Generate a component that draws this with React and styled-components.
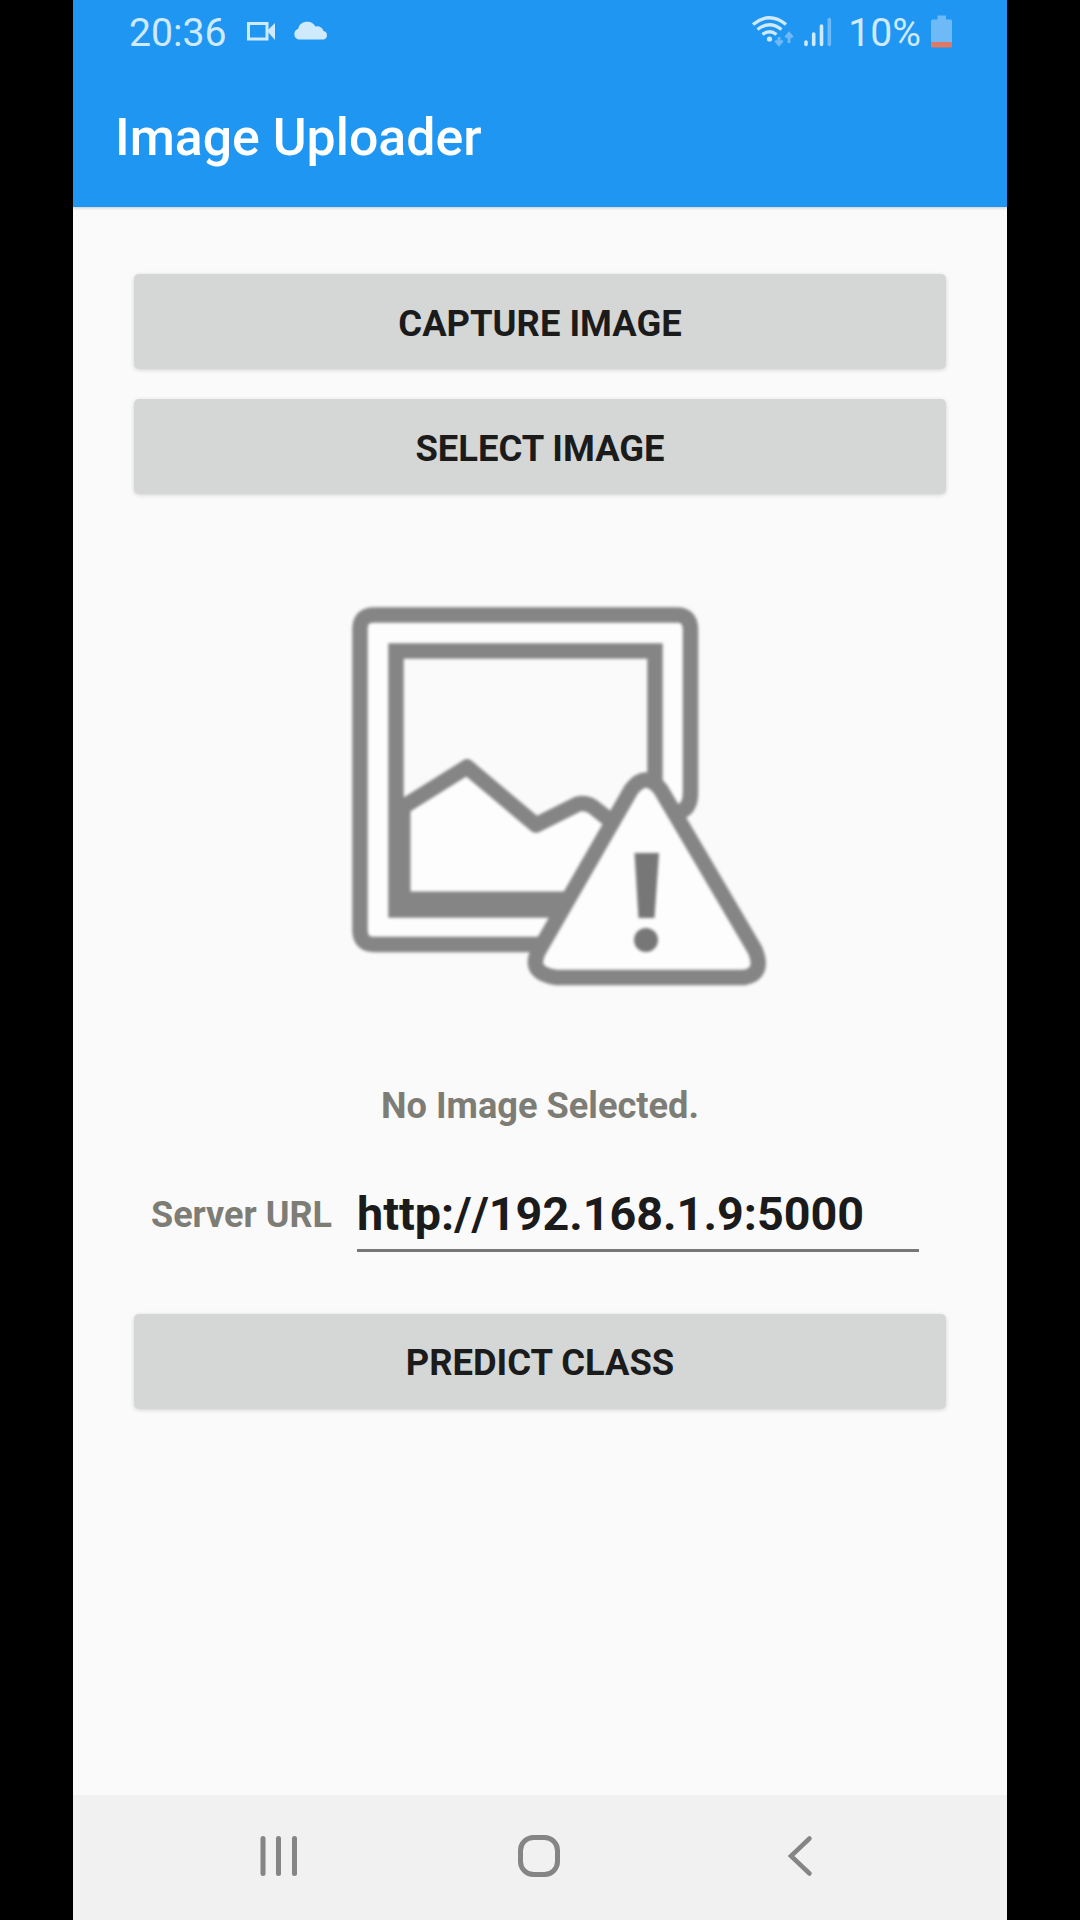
import React from "react";
import styled, { createGlobalStyle } from "styled-components";

const Global = createGlobalStyle`
  *{box-sizing:border-box}
  html,body{margin:0;background:#000}
  body{font-family:Roboto,"Liberation Sans",sans-serif}
`;
const Screen = styled.div`
  width:934px;height:1920px;margin:0 auto;background:#fafafa;
  display:flex;flex-direction:column;overflow:hidden;
`;
const Header = styled.header`
  height:207px;flex:none;background:#2096f3;color:#fff;
  display:flex;flex-direction:column;box-shadow:0 1px 3px rgba(0,0,0,.2);
`;
const StatusBar = styled.div`
  height:64px;padding:0 55px 0 56px;display:flex;justify-content:space-between;
`;
const StatusGroup = styled.div`display:flex;align-items:flex-start;`;
const StatusText = styled.span`
  font-size:39.2px;line-height:46px;margin-top:10px;color:#cfe9fd;white-space:nowrap;
  margin-right:${p => p.$gap}px;
`;
const Icon = styled.svg`display:block;flex:none;overflow:visible;`;
const Title = styled.h1`
  margin:43px 0 0 42px;font-weight:500;font-size:51.8px;line-height:62px;white-space:nowrap;
`;
const Content = styled.main`
  flex:1;padding:67px 61px 0;display:flex;flex-direction:column;
`;
const Button = styled.button`
  width:812px;height:95px;border:0;border-radius:5px;background:#d5d6d6;color:#1b1b1b;
  font:700 36.4px/42px Roboto,"Liberation Sans",sans-serif;padding:${p => p.$nudge || 5}px 0 0;
  margin-top:${p => p.$top || 0}px;text-align:center;
  box-shadow:0 1px 4px rgba(0,0,0,.16);
`;
const Picture = styled(Icon)`margin:86px 0 0 208px;filter:blur(1.6px);`;
const Caption = styled.p`
  margin:91px 0 0;text-align:center;font-weight:700;font-size:36.2px;line-height:42px;color:#7d7d76;
`;
const UrlRow = styled.label`
  margin-top:59px;padding-left:17px;display:flex;align-items:flex-start;
`;
const UrlLabel = styled.span`
  width:206px;font-weight:700;font-size:36px;line-height:42px;padding-top:8px;color:#7d7d76;white-space:nowrap;
`;
const UrlInput = styled.input`
  width:562px;height:66px;border:0;border-bottom:3px solid #77777a;outline:0;
  background:transparent;color:#1b1b1b;padding:0 0 8px;font-kerning:none;
  font:700 46.7px/55px Roboto,"Liberation Sans",sans-serif;font-kerning:none;
`;
const NavBar = styled.nav`
  height:125px;flex:none;background:#f1f1f1;display:flex;align-items:center;
  justify-content:space-between;padding:0 195px 3px 187px;
`;
const HomeIcon = styled(Icon)`margin-right:8px;`;

const light = "#cfe9fd";
const dim = "#6dbaf7";

export default function App() {
  return (
    <>
      <Global />
      <Screen>
        <Header>
          <StatusBar>
            <StatusGroup>
              <StatusText $gap={20}>20:36</StatusText>
              <Icon width="145" height="60" viewBox="247 0 145 60">
                <rect x="248.500" y="23.500" width="18.500" height="15.500" fill="none" stroke={light} strokeWidth="3" />
                <path d="M267 31 L275 23 V40 Z" fill={light} />
                <path d="M298.500 39.500 a5.500 5.500 0 0 1 -0.500 -10.500 a9.500 9.500 0 0 1 17.500 -2.500 a7.300 7.300 0 0 1 8 4.500 a4.300 4.300 0 0 1 -0.500 8.500 z" fill={light} />
              </Icon>
            </StatusGroup>
            <StatusGroup>
              <Icon width="96" height="60" viewBox="753 0 96 60">
                <g fill="none" stroke={light} strokeWidth="3.200">
                  <path d="M754 24.500 Q770.500 11 787 24.500" />
                  <path d="M758.500 29.500 Q770.500 20 782.500 29.500" />
                  <path d="M763.500 34.500 Q770.500 29 777.500 34.500" />
                </g>
                <circle cx="770.500" cy="39" r="2.600" fill={light} />
                <path d="M780 37v7M776.500 40.500l3.500 4l3.500-4M790 43v-8M786.500 37.500l3.500-4l3.500 4" fill="none" stroke={dim} strokeWidth="2.800" />
                <g strokeWidth="3.600" strokeLinecap="round">
                  <path d="M807 42v2.500M814.700 34v10.500M822.500 26v18.500" stroke={light} />
                  <path d="M830.300 19.500v25" stroke={dim} />
                </g>
              </Icon>
              <StatusText $gap={10}>10%</StatusText>
              <Icon width="21" height="60" viewBox="931 0 21 60">
                <path d="M937.500 15.500h8.500v4h4.500q1.500 0 1.500 1.500V42h-21V21q0-1.500 1.500-1.500H937.500z" fill={dim} />
                <path d="M931 42h21v4q0 1.500-1.500 1.500h-18q-1.500 0-1.500-1.500z" fill="#e07866" />
              </Icon>
            </StatusGroup>
          </StatusBar>
          <Title>Image Uploader</Title>
        </Header>
        <Content>
          <Button>CAPTURE IMAGE</Button>
          <Button $top={30} $nudge={4}>SELECT IMAGE</Button>
          <Picture width="430" height="414" viewBox="342 580 430 414">
            <g fill="none" stroke="#858585" strokeWidth="15.500" strokeLinejoin="round">
              <path d="M676 812 Q690 808 690.500 793 V629 Q690 615 677 615 H374 Q360 615 360 629 V930 Q360 944.500 374 944.500 H550 L660 800 Z" fill="#fdfdfd" stroke="none" />
              <path d="M680 812 Q690.500 808 690.500 793 V629 Q690 615 677 615 H374 Q360 615 360 629 V930 Q360 944.500 374 944.500 H545" />
              <path d="M655 790 V651 H396 V910 H560 L655 780" fill="#fafafa" stroke="none" />
              <path d="M655 790 V651 H396 V910 H560" strokeLinejoin="miter" />
              <path d="M403 807 L467 767 L536 825 L578 804 Q588 802 597 810 L612 822 L570 901 H403 Z" fill="#fdfdfd" stroke="none" />
              <path d="M403 807 L467 767 L536 825 L578 804 Q588 802 597 810 L612 822" />
              <path d="M405 807V903" strokeWidth="11" />
              <path d="M402 901H570" strokeWidth="19" />
              <path d="M631 790 Q646 770 661 790 L755 950 Q765 974 744 977.500 H557 Q528 974 538 952 Z" fill="#fdfdfd" />
            </g>
            <path d="M634.500 853h24.500l-4.500 65h-16z" fill="#777" />
            <circle cx="646" cy="940" r="12" fill="#777" />
          </Picture>
          <Caption>No Image Selected.</Caption>
          <UrlRow>
            <UrlLabel>Server URL</UrlLabel>
            <UrlInput defaultValue="http://192.168.1.9:5000" spellCheck={false} />
          </UrlRow>
          <Button $top={62} $nudge={3}>PREDICT CLASS</Button>
        </Content>
        <NavBar>
          <Icon width="38" height="40" viewBox="0 0 38 40">
            <path d="M3 2.500v35M18.500 2.500v35M34.500 2.500v35" stroke="#858585" strokeWidth="5" strokeLinecap="round" />
          </Icon>
          <HomeIcon width="42" height="42" viewBox="0 0 42 42">
            <rect x="2.500" y="2.500" width="37" height="37" rx="13" fill="none" stroke="#858585" strokeWidth="5" />
          </HomeIcon>
          <Icon width="24" height="40" viewBox="0 0 24 40">
            <path d="M21.500 2.500L3 20L21.500 37.500" fill="none" stroke="#858585" strokeWidth="4.500" strokeLinecap="round" />
          </Icon>
        </NavBar>
      </Screen>
    </>
  );
}
